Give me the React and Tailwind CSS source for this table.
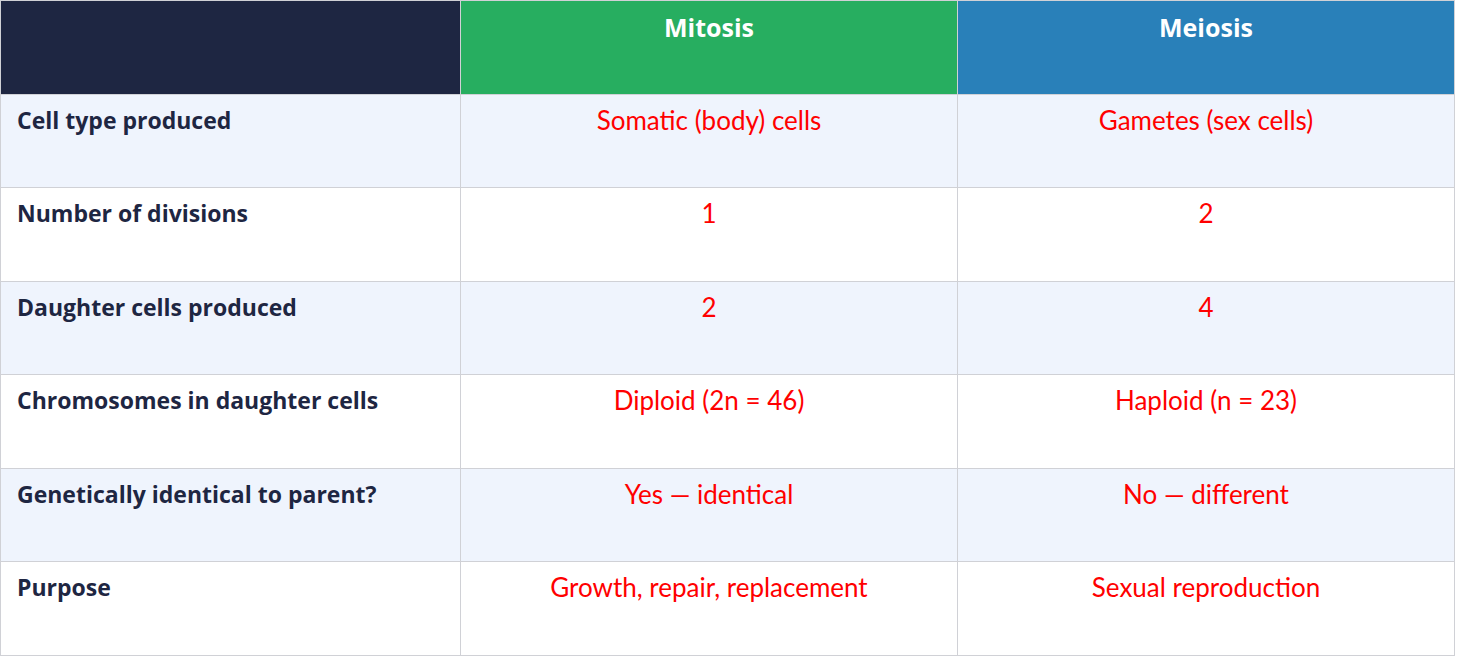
import React from "react";

const rows = [
  ["Cell type produced", "Somatic (body) cells", "Gametes (sex cells)"],
  ["Number of divisions", "1", "2"],
  ["Daughter cells produced", "2", "4"],
  ["Chromosomes in daughter cells", "Diploid (2n = 46)", "Haploid (n = 23)"],
  ["Genetically identical to parent?", "Yes — identical", "No — different"],
  ["Purpose", "Growth, repair, replacement", "Sexual reproduction"],
];

export default function App() {
  return (
    <div className="bg-white w-[1458px] h-[658px]">
      <div className="grid grid-cols-[460px_497px_497px] grid-rows-[repeat(7,1fr)] w-[1455px] h-[656px] border-l border-t border-[#d0d1d6]">
        <div className="bg-[#1e2642] border-r border-b border-[#d0d1d6]" />
        <div className="bg-[#27ae60] border-r border-b border-[#d0d1d6] text-center text-white font-bold text-[25px] leading-[36px] pt-[8px] font-['Open_Sans',sans-serif]">
          Mitosis
        </div>
        <div className="bg-[#2980b9] border-r border-b border-[#d0d1d6] text-center text-white font-bold text-[25px] leading-[36px] pt-[8px] font-['Open_Sans',sans-serif]">
          Meiosis
        </div>
        {rows.map((r, i) => {
          const bg = i % 2 === 0 ? "bg-[#eff4fd]" : "bg-white";
          return (
            <React.Fragment key={r[0]}>
              <div className={`${bg} border-r border-b border-[#d0d1d6] pl-[16px] pt-[8px] text-[23px] leading-[34px] font-bold text-[#1e2642] font-['Open_Sans',sans-serif]`}>
                {r[0]}
              </div>
              <div className={`${bg} border-r border-b border-[#d0d1d6] text-center pt-[7px] text-[26px] leading-[36px] text-[#ff0000] font-['Lato',sans-serif]`}>
                {r[1]}
              </div>
              <div className={`${bg} border-r border-b border-[#d0d1d6] text-center pt-[7px] text-[26px] leading-[36px] text-[#ff0000] font-['Lato',sans-serif]`}>
                {r[2]}
              </div>
            </React.Fragment>
          );
        })}
      </div>
    </div>
  );
}
